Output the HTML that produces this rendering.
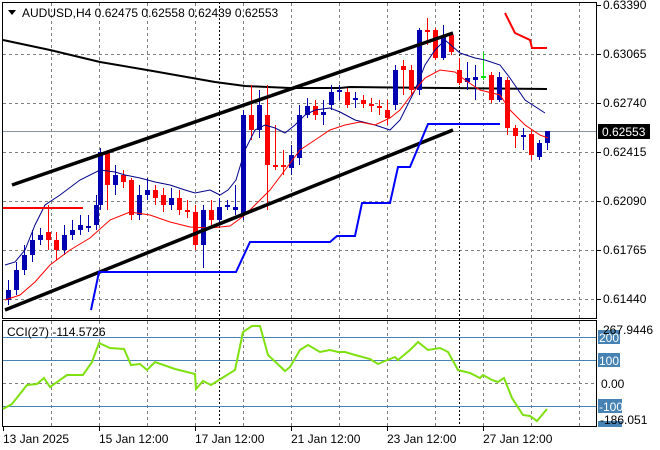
<!DOCTYPE html>
<html><head><meta charset="utf-8"><style>
body{margin:0;background:#fff;width:660px;height:450px;overflow:hidden}
svg{display:block;font-family:"Liberation Sans",sans-serif;font-size:12px}
</style></head><body>
<svg id="s" width="660" height="450" xmlns="http://www.w3.org/2000/svg">
<rect width="660" height="450" fill="#fff"/>
<g id="grid" stroke="#808080" stroke-dasharray="3,3" stroke-width="1"></g>
<line x1="219.5" y1="2" x2="219.5" y2="426" stroke="#000" stroke-dasharray="2,2"/>
<line x1="459.5" y1="2" x2="459.5" y2="426" stroke="#000" stroke-dasharray="2,2"/>
<line x1="2" y1="131.5" x2="597" y2="131.5" stroke="#8894a0"/>
<polyline fill="none" stroke="#000" stroke-width="2" points="3,40 50,50 100,62 147,70 215,82 245,86 290,88 340,88 350,87 547,89"/>
<g id="c"></g>
<polyline fill="none" stroke="#00008b" stroke-width="1" points="5,265 15,262 25,250 35,225 45,205 60,195 80,180 100,170 115,172 125,175 140,178 155,182 170,185 185,190 195,193 210,190 220,195 228,190 236,180 245,150 255,130 265,125 275,128 285,133 295,125 305,115 315,110 330,108 340,112 355,120 375,125 390,130 400,120 415,90 425,65 435,50 445,40 460,53 475,58 485,60 500,65 510,78 525,100 545,113"/>
<polyline fill="none" stroke="#ff0000" stroke-width="1" points="5,300 20,295 35,282 50,265 70,250 90,238 110,220 130,212 150,215 170,222 190,227 210,228 230,226 245,215 260,200 270,190 285,170 300,150 315,140 330,130 345,125 360,122 375,125 390,118 400,110 415,90 425,78 440,70 455,72 465,80 480,90 500,95 510,110 525,125 540,135 548,138"/>
<line x1="12" y1="185" x2="453" y2="33" stroke="#000" stroke-width="3.5"/>
<line x1="5" y1="310" x2="453" y2="130" stroke="#000" stroke-width="3.5"/>
<polyline fill="none" stroke="#0000ff" stroke-width="2" points="91,310 99,272 236,272 250,242 330,242 337,236 355,236 362,203 390,203 398,167 410,167 428,124 500,124"/>
<line x1="3" y1="208" x2="83" y2="208" stroke="#ff0000" stroke-width="2"/>
<polyline fill="none" stroke="#ff0000" stroke-width="2" points="505,13 515,33 530,40 532,48 547,48"/>
<rect x="2.5" y="2.5" width="594" height="316" fill="none" stroke="#000"/>
<rect x="2.5" y="320.5" width="594" height="106" fill="none" stroke="#000"/>
<g stroke="#4682b4"><line x1="3" y1="337.5" x2="596" y2="337.5"/><line x1="3" y1="360.5" x2="596" y2="360.5"/><line x1="3" y1="406.5" x2="596" y2="406.5"/></g>
<line x1="3" y1="383.5" x2="596" y2="383.5" stroke="#808080" stroke-dasharray="3,3"/>
<polyline fill="none" stroke="#7fe010" stroke-width="2" points="3,409 12,404 27,385 37,384 44,378 50,387 67,375 83,375 92,362 99,343 110,348 124,349 131,365 140,364 147,370 155,362 175,369 195,374 196,389 203,381 211,385 235,370 243,332 252,326 260,326 268,355 285,371 290,367 300,350 308,345 320,352 330,350 338,352 345,352 355,355 370,359 378,364 385,361 395,357 398,360 410,350 418,342 428,350 440,348 448,352 458,370 470,373 480,378 483,375 492,380 498,382 504,378 512,398 523,415 530,416 537,421 547,409"/>
<path d="M8,10 L16,10 L12,15 Z" fill="#000"/>
<text x="22" y="17" fill="#000">AUDUSD,H4  0.62475 0.62558 0.62439 0.62553</text>
<text x="7" y="336" fill="#000">CCI(27) -114.5726</text>
<g id="ax" fill="#000"></g>
<rect x="598" y="124" width="52" height="15" fill="#000"/>
<text x="602" y="136" fill="#fff">0.62553</text>
<rect x="598" y="330" width="22" height="14" fill="#4682b4"/>
<rect x="598" y="353" width="22" height="14" fill="#4682b4"/>
<rect x="598" y="399" width="24" height="14" fill="#4682b4"/>
<rect x="598" y="421" width="24" height="6" fill="#4682b4"/>
<text x="599" y="342" fill="#fff">200</text>
<text x="599" y="365" fill="#fff">100</text>
<text x="599" y="411" fill="#fff">-100</text>
<text x="603" y="334" fill="#000">267.9446</text>
<text x="601" y="388" fill="#000">0.00</text>
<text x="600" y="424" fill="#000">-186.051</text>
<g fill="#000">
<text x="3" y="443">13 Jan 2025</text><text x="99" y="443">15 Jan 12:00</text><text x="195" y="443">17 Jan 12:00</text><text x="291" y="443">21 Jan 12:00</text><text x="387" y="443">23 Jan 12:00</text><text x="483" y="443">27 Jan 12:00</text>
</g>
</svg>
<script>
var NS="http://www.w3.org/2000/svg";
function el(p,t,a){var e=document.createElementNS(NS,t);for(var k in a)e.setAttribute(k,a[k]);p.appendChild(e);return e;}
var g=document.getElementById('grid');
for(var x=51;x<597;x+=48){el(g,'line',{x1:x+.5,y1:3,x2:x+.5,y2:318});el(g,'line',{x1:x+.5,y1:321,x2:x+.5,y2:426});}
var ys=[5,54,103,152,201,250,299],ps=["0.63390","0.63065","0.62740","0.62415","0.62090","0.61765","0.61440"];
var ax=document.getElementById('ax');
ys.forEach(function(y,i){if(i>0)el(g,'line',{x1:3,y1:y+.5,x2:596,y2:y+.5});el(ax,'line',{x1:597,y1:y+.5,x2:601,y2:y+.5,stroke:'#000'});var t=el(ax,'text',{x:603,y:y+4});t.textContent=ps[i];});
[3,99,195,291,387,483].forEach(function(x){el(ax,'line',{x1:x+.5,y1:426,x2:x+.5,y2:431,stroke:'#000'});});
var C=[[8,300,290,305,280],[16,290,270,295,262],[24,270,255,275,245],[32,255,240,262,230],[40,240,235,245,228],[48,232,240,250,205],[56,240,250,260,232],[64,250,235,255,225],[72,235,230,240,220],[80,230,225,235,215],[88,228,226,232,215],[96,225,205,230,195],[100,205,152,210,148],[107,152,185,150,210],[115,185,175,195,165],[123,175,182,188,170],[131,180,215,220,178],[139,215,195,220,185],[147,195,190,200,178],[155,190,198,205,185],[163,195,205,212,188],[171,205,198,210,188],[179,198,210,215,190],[187,210,212,218,200],[195,212,245,250,205],[203,245,210,268,205],[211,210,220,225,200],[219,220,207,225,198],[227,207,205,210,200],[235,210,207,215,185],[243,215,115,220,110],[251,115,130,85,140],[259,130,105,138,90],[267,115,165,85,210],[275,165,165,170,125],[283,165,166,175,150],[291,168,155,175,145],[299,158,115,165,105],[307,115,106,118,98],[315,106,115,100,120],[323,115,112,125,100],[331,105,92,110,85],[339,92,90,100,85],[347,92,105,88,108],[355,100,98,108,92],[363,100,104,108,95],[371,104,106,112,98],[379,106,108,115,100],[387,110,118,125,100],[395,105,70,110,65],[403,66,70,60,95],[411,70,90,65,95],[419,90,30,95,28],[427,30,32,18,45],[435,30,58,28,60],[443,58,36,60,25],[451,35,52,33,55],[459,70,83,58,85],[467,82,78,62,90],[475,80,77,65,100],[483,76,77,52,80],[491,75,100,72,103],[499,100,77,72,102],[507,80,128,77,135],[515,128,136,125,148],[523,136,135,128,150],[531,134,155,130,160],[539,157,143,140,160],[547,143,131,131,150]];
var cg=document.getElementById('c');
C.forEach(function(c){var x=c[0],o=c[1],cl=c[2],h=Math.min(c[3],c[4],o,cl),l=Math.max(c[3],c[4],o,cl);
var up=cl<o,col=up?'#0000b0':'#ff0000';if(x==483)col='#00e000';
el(cg,'line',{x1:x+.5,y1:h,x2:x+.5,y2:l,stroke:col});
var t=Math.min(o,cl),b=Math.max(o,cl);if(b-t<2)b=t+2;
el(cg,'rect',{x:x-2,y:t,width:5,height:b-t,fill:col});});
</script>
</body></html>
